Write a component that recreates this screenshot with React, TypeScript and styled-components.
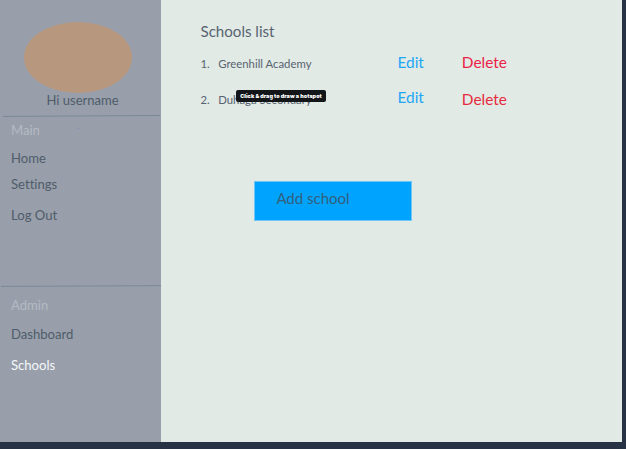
import React from 'react';
import styled, { createGlobalStyle } from 'styled-components';

const GlobalStyle = createGlobalStyle`
  body { margin: 0; background: #273345; }
  * { box-sizing: border-box; }
`;

const Frame = styled.div`
  display: flex;
  width: 626px;
  height: 449px;
  padding: 0 4px 7px 0;
  overflow: hidden;
  background: #273345;
  font-family: Lato, 'Liberation Sans', sans-serif;
  font-variant-ligatures: none;
`;

const Sidebar = styled.aside`
  display: flex;
  flex-direction: column;
  flex: 0 0 161px;
  background: #989fab;
`;

const Avatar = styled.div`
  flex: none;
  width: 108.5px;
  height: 71px;
  margin: 21.5px 0 0 23.6px;
  border-radius: 50%;
  background: #b8977f;
`;

const Greeting = styled.div`
  height: 20px;
  margin: -2.6px 0 0 46.4px;
  color: #4f5c69;
  font-size: 13.05px;
  line-height: 20px;
  white-space: nowrap;
`;

const Divider = styled.svg<{ $top: number }>`
  display: block;
  flex: none;
  width: 161px;
  height: 4px;
  margin-top: ${p => p.$top}px;
`;

const Group = styled.nav<{ $gap: number }>`
  display: flex;
  flex-direction: column;
  align-items: flex-start;
  position: relative;
  padding: ${p => p.$gap}px 0 0 11px;
`;

const tones = { heading: '#b4bac3', normal: '#4f5c69', active: '#f5f7f9' };

const Item = styled.a<{ $tone?: keyof typeof tones; $top?: number }>`
  height: 20px;
  margin-top: ${p => p.$top ?? 0}px;
  color: ${p => tones[p.$tone ?? 'normal']};
  font-size: 13.1px;
  line-height: 20px;
  white-space: nowrap;
`;

const Dot = styled.span`
  position: absolute;
  left: 78px;
  top: 10px;
  width: 1px;
  height: 1px;
  background: #8289bd;
`;

const Main = styled.main`
  display: flex;
  flex-direction: column;
  flex: 1;
  padding: 21px 0 0 39.5px;
  background: #e1eae5;
`;

const Title = styled.h1`
  height: 20px;
  margin: 0;
  color: #586371;
  font-size: 15.1px;
  font-weight: 400;
  line-height: 20px;
`;

const List = styled.div`
  display: flex;
  flex-direction: column;
  gap: 16px;
  margin-top: 12px;
`;

const Row = styled.div`
  display: grid;
  grid-template-columns: 17.7px 179.3px 64.3px 60px;
  position: relative;
  height: 20px;
  color: #586371;
  font-size: 11.35px;
  line-height: 22px;
  white-space: nowrap;
`;

const Action = styled.a<{ $color: string; $top?: number }>`
  margin-top: ${p => p.$top ?? 0}px;
  color: ${p => p.$color};
  font-size: 15.4px;
  line-height: 19px;
`;

const Tooltip = styled.div`
  position: absolute;
  left: 35.5px;
  top: 1px;
  width: 90px;
  height: 12px;
  border-radius: 2px;
  background: #131619;
  color: #fff;
  font-family: Inter, sans-serif;
  font-size: 5.4px;
  font-weight: 900;
  letter-spacing: 0.06px;
  line-height: 12px;
  text-align: center;
`;

const AddButton = styled.button`
  width: 158px;
  height: 40px;
  margin: 72px 0 0 53.2px;
  padding: 0 0 7px 21.7px;
  border: 1px solid #70c5f5;
  background: #00a4ff;
  color: #335f7c;
  font-family: inherit;
  font-size: 15px;
  line-height: 20px;
  text-align: left;
`;

const BLUE = '#1fa6f5';

export default function App() {
  return (
    <Frame>
      <GlobalStyle />
      <Sidebar>
        <Avatar />
        <Greeting>Hi username</Greeting>
        <Divider $top={3.6}>
          <line x1="3" y1="2.4" x2="160" y2="1.5" stroke="#7a8896" />
        </Divider>
        <Group $gap={2.8}>
          <Item $tone="heading">Main</Item>
          <Dot />
          <Item $top={8}>Home</Item>
          <Item $top={6}>Settings</Item>
          <Item $top={10.5}>Log Out</Item>
        </Group>
        <Divider $top={58.9}>
          <line x1="1" y1="2.4" x2="161" y2="1.7" stroke="#7a8896" />
        </Divider>
        <Group $gap={7.8}>
          <Item $tone="heading">Admin</Item>
          <Item $top={9}>Dashboard</Item>
          <Item $top={11} $tone="active">Schools</Item>
        </Group>
      </Sidebar>
      <Main>
        <Title>Schools list</Title>
        <List>
          <Row>
            <span>1.</span>
            <span>Greenhill Academy</span>
            <Action $color={BLUE}>Edit</Action>
            <Action $color="#eb2348">Delete</Action>
          </Row>
          <Row>
            <span>2.</span>
            <span>Duhaga Secondary</span>
            <Action $color={BLUE} $top={-1}>Edit</Action>
            <Action $color="#e62b3e" $top={1}>Delete</Action>
            <Tooltip>Click &amp; drag to draw a hotspot</Tooltip>
          </Row>
        </List>
        <AddButton>Add school</AddButton>
      </Main>
    </Frame>
  );
}
